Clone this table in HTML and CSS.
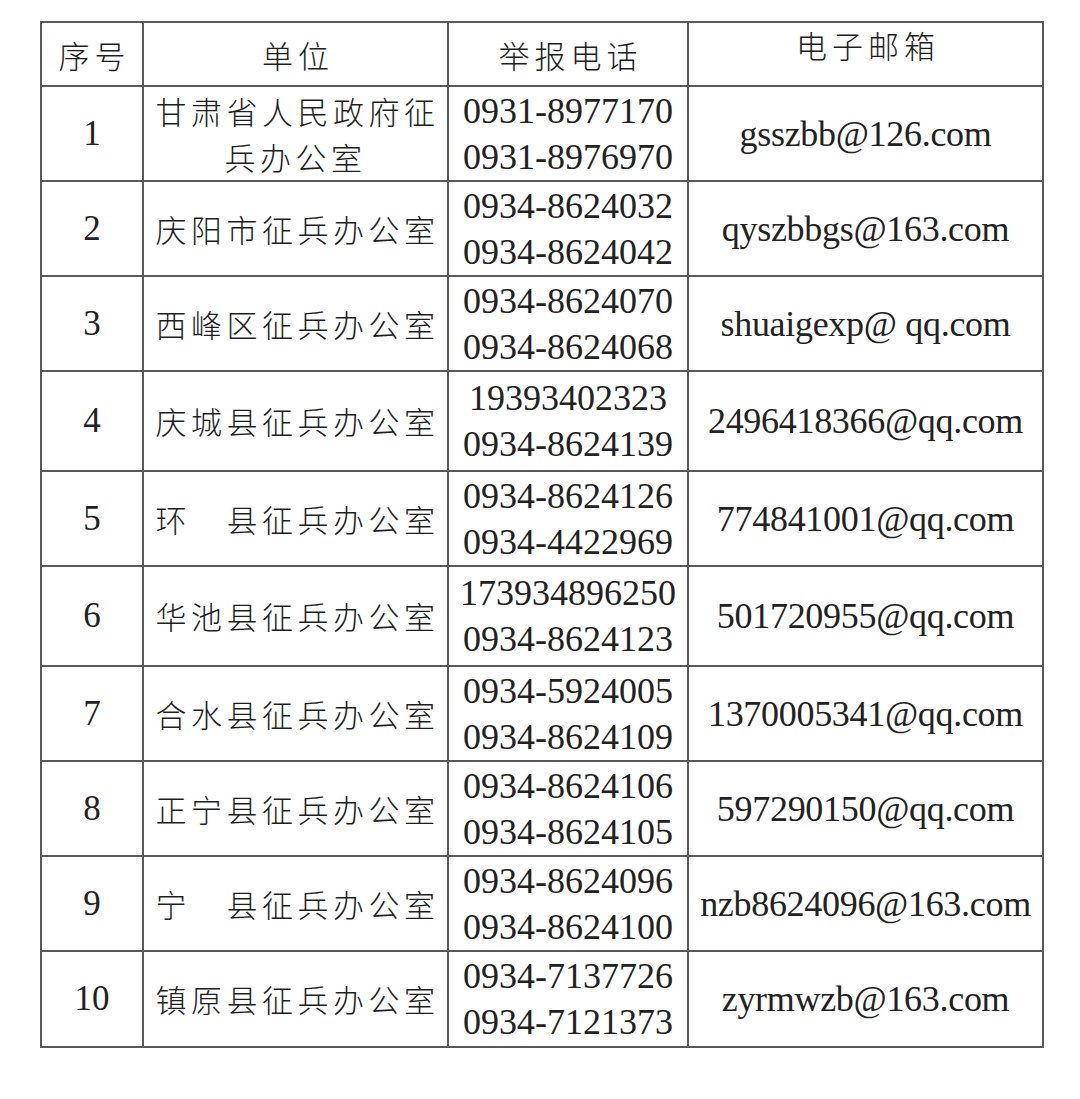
FILE: index.html
```html
<!DOCTYPE html>
<html lang="zh-CN">
<head>
<meta charset="utf-8">
<title>征兵办公室举报电话</title>
<link rel="stylesheet" href="styles.css">
</head>
<body>
<table class="grid">
  <colgroup>
    <col class="c-no">
    <col class="c-unit">
    <col class="c-tel">
    <col class="c-mail">
  </colgroup>
  <thead>
    <tr class="head">
      <th class="h-cn">序号</th>
      <th class="h-cn">单位</th>
      <th class="h-cn">举报电话</th>
      <th class="h-cn h-mail">电子邮箱</th>
    </tr>
  </thead>
  <tbody>
    <tr class="row">
      <td class="no">1</td>
      <td class="unit">甘肃省人民政府征兵办公室</td>
      <td class="tel">0931-8977170<br>0931-8976970</td>
      <td class="mail">gsszbb@126.com</td>
    </tr>
    <tr class="row">
      <td class="no">2</td>
      <td class="unit">庆阳市征兵办公室</td>
      <td class="tel">0934-8624032<br>0934-8624042</td>
      <td class="mail">qyszbbgs@163.com</td>
    </tr>
    <tr class="row">
      <td class="no">3</td>
      <td class="unit">西峰区征兵办公室</td>
      <td class="tel">0934-8624070<br>0934-8624068</td>
      <td class="mail">shuaigexp@ qq.com</td>
    </tr>
    <tr class="row tall">
      <td class="no">4</td>
      <td class="unit">庆城县征兵办公室</td>
      <td class="tel">19393402323<br>0934-8624139</td>
      <td class="mail">2496418366@qq.com</td>
    </tr>
    <tr class="row">
      <td class="no">5</td>
      <td class="unit">环　县征兵办公室</td>
      <td class="tel">0934-8624126<br>0934-4422969</td>
      <td class="mail">774841001@qq.com</td>
    </tr>
    <tr class="row tall">
      <td class="no">6</td>
      <td class="unit">华池县征兵办公室</td>
      <td class="tel">173934896250<br>0934-8624123</td>
      <td class="mail">501720955@qq.com</td>
    </tr>
    <tr class="row">
      <td class="no">7</td>
      <td class="unit">合水县征兵办公室</td>
      <td class="tel">0934-5924005<br>0934-8624109</td>
      <td class="mail">1370005341@qq.com</td>
    </tr>
    <tr class="row">
      <td class="no">8</td>
      <td class="unit">正宁县征兵办公室</td>
      <td class="tel">0934-8624106<br>0934-8624105</td>
      <td class="mail">597290150@qq.com</td>
    </tr>
    <tr class="row">
      <td class="no">9</td>
      <td class="unit">宁　县征兵办公室</td>
      <td class="tel">0934-8624096<br>0934-8624100</td>
      <td class="mail">nzb8624096@163.com</td>
    </tr>
    <tr class="row last">
      <td class="no">10</td>
      <td class="unit">镇原县征兵办公室</td>
      <td class="tel">0934-7137726<br>0934-7121373</td>
      <td class="mail">zyrmwzb@163.com</td>
    </tr>
  </tbody>
</table>
</body>
</html>
```
FILE: styles.css
```css
html, body {
  margin: 0;
  padding: 0;
  background: #ffffff;
}

body {
  padding: 21px 0 0 40px;
  font-family: "Liberation Serif", "Noto Sans CJK SC", serif;
  color: #222222;
}

.grid {
  border-collapse: collapse;
  table-layout: fixed;
  width: 1002px;
}

.c-no { width: 102px; }
.c-unit { width: 305px; }
.c-tel { width: 240px; }
.c-mail { width: 355px; }

.grid th,
.grid td {
  border: 2px solid #595959;
  padding: 0;
  text-align: center;
  vertical-align: middle;
}

.head {
  height: 64px;
}

.h-cn {
  font-family: "Noto Sans CJK SC", sans-serif;
  font-weight: 300;
  font-size: 31px;
  letter-spacing: 5px;
  text-indent: 5px;
  line-height: 1;
  color: #1e1e1e;
}

.grid .h-mail {
  padding-bottom: 20px;
}

.row {
  height: 95px;
}

.row.tall {
  height: 100px;
}

.row.last {
  height: 96px;
}

.no {
  font-size: 35px;
}

.unit {
  font-family: "Noto Sans CJK SC", sans-serif;
  font-weight: 300;
  font-size: 31px;
  letter-spacing: 4.5px;
  text-indent: 4px;
  line-height: 46px;
  color: #1e1e1e;
}

.grid .unit {
  padding: 0 6px;
}

.tel {
  font-size: 36px;
  line-height: 46px;
}

.mail {
  font-size: 36px;
  letter-spacing: -0.3px;
}
```
